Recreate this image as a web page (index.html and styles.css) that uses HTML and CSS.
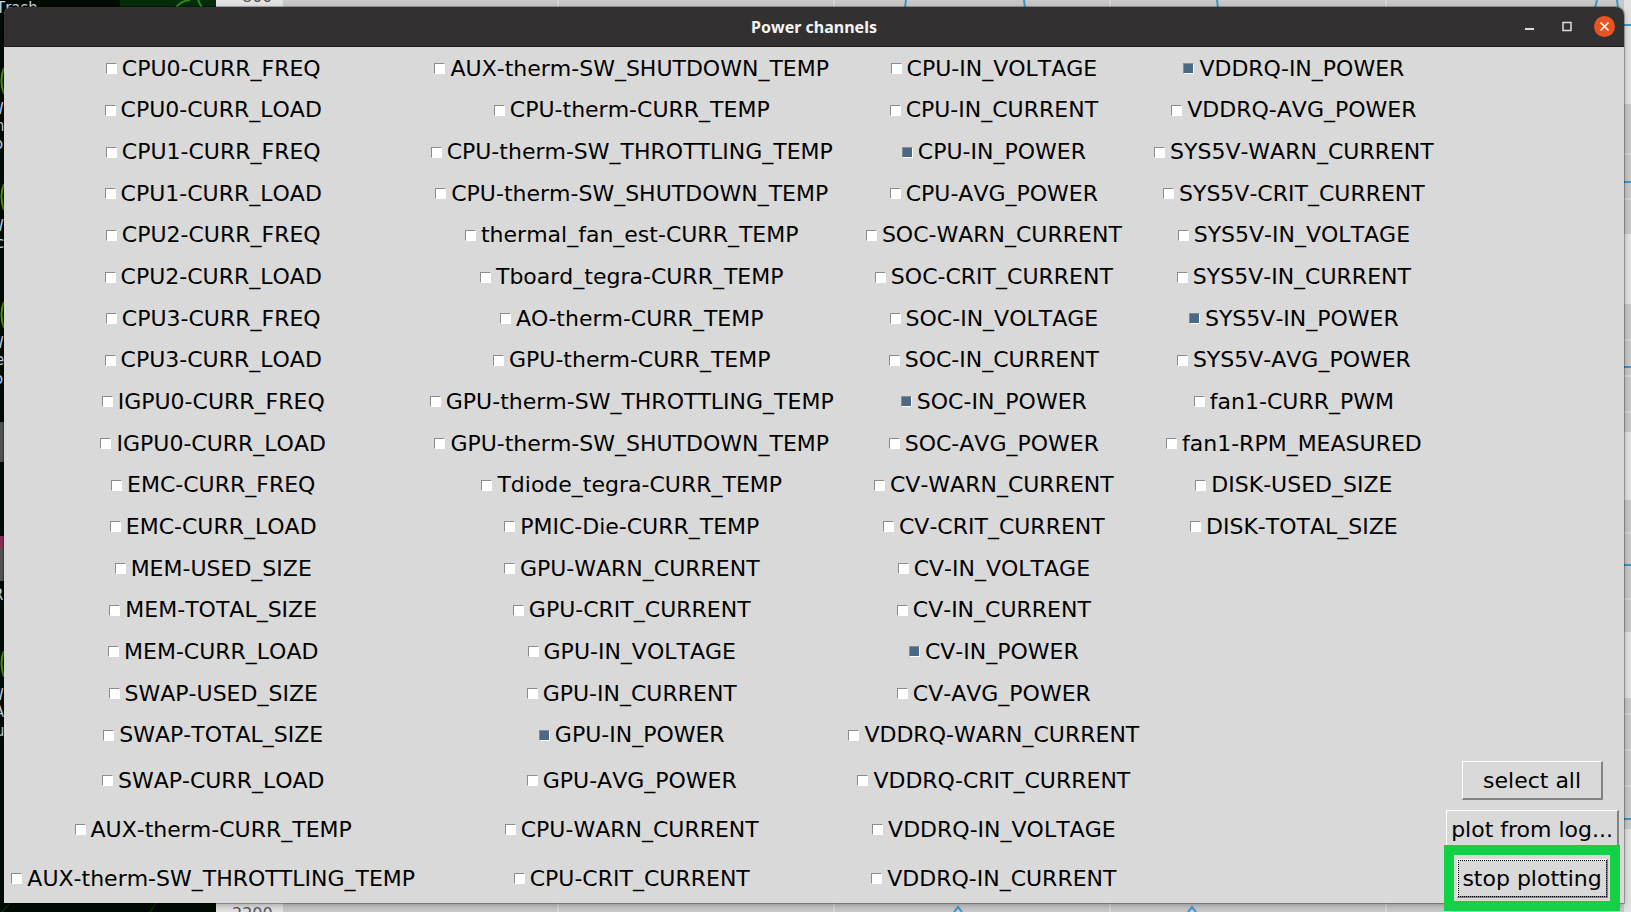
FILE: index.html
```
<!DOCTYPE html>
<html lang="en">
<head>
    <meta charset="UTF-8">
    <meta name="viewport" content="width=device-width, initial-scale=1.0">
    <title>Power channels</title>
    <link rel="stylesheet" href="styles.css">
</head>
<body>
    <!-- desktop and plot behind the window -->
    <svg class="backdrop" viewBox="0 0 1631 912" preserveAspectRatio="none" aria-hidden="true">
        <rect width="216" height="912" fill="#020a04"/>
        <path d="M120 0h96v8h-96z" fill="#062c0a"/>
        <path d="M176 8q4-7 14-8M198 0l4 8" stroke="#2f8a1c" stroke-width="2" fill="none"/>
        <path d="M4 68q-5 12 0 26M4 184q-5 12 0 26M4 302q-5 12 0 26M4 651q-5 12 0 26" stroke="#4f9a12" stroke-width="2" fill="none"/>
        <path d="M0 422h4v40H0zM0 548h4v33H0z" fill="#555"/>
        <path d="M0 536h4v12H0z" fill="#8a3358"/>
        <path d="M2 912l8-9M150 912l6-9" stroke="#0c4a0c" fill="none"/>
        <g class="icon-name">
            <text x="-4" y="13">Trash</text>
            <text x="-11" y="114">W</text>
            <text x="-5" y="131">n</text>
            <text x="-6" y="149">o</text>
            <text x="-11" y="231">W</text>
            <text x="-4" y="248">c</text>
            <text x="-11" y="348">W</text>
            <text x="-5" y="365">e</text>
            <text x="-6" y="384">o</text>
            <text x="-7" y="600">R</text>
            <text x="-11" y="700">W</text>
            <text x="-6" y="717">A</text>
            <text x="-5" y="736">u</text>
        </g>
        <rect x="216" width="1415" height="912" fill="#c8c8c8"/>
        <path d="M216 0h67v912h-67zM1624 0h7v104h-7zM1624 234h7v70h-7zM1624 432h7v68h-7zM1624 632h7v66h-7zM1624 829h7v83h-7z" fill="#e2e2e2"/>
        <path d="M558 0v8M834 0v8M1110 0v8M1386 0v8M558 903v9M834 903v9M1110 903v9M1386 903v9M1624 154h7M1624 199h7M1624 340h7M1624 376h7M1624 412h7M1624 533h7M1624 599h7M1624 714h7M1624 750h7M1624 786h7" stroke="#e6e6e6" fill="none"/>
        <path d="M906 0l-1 8M1024 0l1 8M1217 0l1 8M1597 0l-2 8M1617 0l1 8M1624 25h7M1624 182h7M1624 367h7M1624 565h7M1624 819h7M954 912l4-5 4 5M1188 912l4-5 4 5" stroke="#3a96cc" stroke-width="2" fill="none"/>
        <g class="tick">
            <text x="242" y="2">800</text>
            <text x="232" y="919">2200</text>
        </g>
    </svg>

    <main class="window">
        <header class="titlebar">
            <h1>Power channels</h1>
            <div class="controls">
                <button type="button" aria-label="Minimize">
                    <svg width="21" height="21" viewBox="0 0 21 21"><path d="M5 13h9" stroke="#ddd" stroke-width="2"/></svg>
                </button>
                <button type="button" aria-label="Maximize">
                    <svg width="21" height="21" viewBox="0 0 21 21"><path d="M6 6.500h8v8H6z" stroke="#ddd" stroke-width="1.500" fill="none"/></svg>
                </button>
                <button type="button" aria-label="Close">
                    <svg width="21" height="21" viewBox="0 0 21 21"><circle cx="10.500" cy="10.500" r="10.500" fill="#e95420"/><path d="M6.500 6.500l8 8M14.500 6.500l-8 8" stroke="#fff" stroke-width="1.600"/></svg>
                </button>
            </div>
        </header>

        <form class="channels">
            <label><input type="checkbox">CPU0-CURR_FREQ</label>
            <label><input type="checkbox">CPU0-CURR_LOAD</label>
            <label><input type="checkbox">CPU1-CURR_FREQ</label>
            <label><input type="checkbox">CPU1-CURR_LOAD</label>
            <label><input type="checkbox">CPU2-CURR_FREQ</label>
            <label><input type="checkbox">CPU2-CURR_LOAD</label>
            <label><input type="checkbox">CPU3-CURR_FREQ</label>
            <label><input type="checkbox">CPU3-CURR_LOAD</label>
            <label><input type="checkbox">IGPU0-CURR_FREQ</label>
            <label><input type="checkbox">IGPU0-CURR_LOAD</label>
            <label><input type="checkbox">EMC-CURR_FREQ</label>
            <label><input type="checkbox">EMC-CURR_LOAD</label>
            <label><input type="checkbox">MEM-USED_SIZE</label>
            <label><input type="checkbox">MEM-TOTAL_SIZE</label>
            <label><input type="checkbox">MEM-CURR_LOAD</label>
            <label><input type="checkbox">SWAP-USED_SIZE</label>
            <label><input type="checkbox">SWAP-TOTAL_SIZE</label>
            <label><input type="checkbox">SWAP-CURR_LOAD</label>
            <label><input type="checkbox">AUX-therm-CURR_TEMP</label>
            <label><input type="checkbox">AUX-therm-SW_THROTTLING_TEMP</label>

            <label><input type="checkbox">AUX-therm-SW_SHUTDOWN_TEMP</label>
            <label><input type="checkbox">CPU-therm-CURR_TEMP</label>
            <label><input type="checkbox">CPU-therm-SW_THROTTLING_TEMP</label>
            <label><input type="checkbox">CPU-therm-SW_SHUTDOWN_TEMP</label>
            <label><input type="checkbox">thermal_fan_est-CURR_TEMP</label>
            <label><input type="checkbox">Tboard_tegra-CURR_TEMP</label>
            <label><input type="checkbox">AO-therm-CURR_TEMP</label>
            <label><input type="checkbox">GPU-therm-CURR_TEMP</label>
            <label><input type="checkbox">GPU-therm-SW_THROTTLING_TEMP</label>
            <label><input type="checkbox">GPU-therm-SW_SHUTDOWN_TEMP</label>
            <label><input type="checkbox">Tdiode_tegra-CURR_TEMP</label>
            <label><input type="checkbox">PMIC-Die-CURR_TEMP</label>
            <label><input type="checkbox">GPU-WARN_CURRENT</label>
            <label><input type="checkbox">GPU-CRIT_CURRENT</label>
            <label><input type="checkbox">GPU-IN_VOLTAGE</label>
            <label><input type="checkbox">GPU-IN_CURRENT</label>
            <label><input type="checkbox" checked>GPU-IN_POWER</label>
            <label><input type="checkbox">GPU-AVG_POWER</label>
            <label><input type="checkbox">CPU-WARN_CURRENT</label>
            <label><input type="checkbox">CPU-CRIT_CURRENT</label>

            <label><input type="checkbox">CPU-IN_VOLTAGE</label>
            <label><input type="checkbox">CPU-IN_CURRENT</label>
            <label><input type="checkbox" checked>CPU-IN_POWER</label>
            <label><input type="checkbox">CPU-AVG_POWER</label>
            <label><input type="checkbox">SOC-WARN_CURRENT</label>
            <label><input type="checkbox">SOC-CRIT_CURRENT</label>
            <label><input type="checkbox">SOC-IN_VOLTAGE</label>
            <label><input type="checkbox">SOC-IN_CURRENT</label>
            <label><input type="checkbox" checked>SOC-IN_POWER</label>
            <label><input type="checkbox">SOC-AVG_POWER</label>
            <label><input type="checkbox">CV-WARN_CURRENT</label>
            <label><input type="checkbox">CV-CRIT_CURRENT</label>
            <label><input type="checkbox">CV-IN_VOLTAGE</label>
            <label><input type="checkbox">CV-IN_CURRENT</label>
            <label><input type="checkbox" checked>CV-IN_POWER</label>
            <label><input type="checkbox">CV-AVG_POWER</label>
            <label><input type="checkbox">VDDRQ-WARN_CURRENT</label>
            <label><input type="checkbox">VDDRQ-CRIT_CURRENT</label>
            <label><input type="checkbox">VDDRQ-IN_VOLTAGE</label>
            <label><input type="checkbox">VDDRQ-IN_CURRENT</label>

            <label><input type="checkbox" checked>VDDRQ-IN_POWER</label>
            <label><input type="checkbox">VDDRQ-AVG_POWER</label>
            <label><input type="checkbox">SYS5V-WARN_CURRENT</label>
            <label><input type="checkbox">SYS5V-CRIT_CURRENT</label>
            <label><input type="checkbox">SYS5V-IN_VOLTAGE</label>
            <label><input type="checkbox">SYS5V-IN_CURRENT</label>
            <label><input type="checkbox" checked>SYS5V-IN_POWER</label>
            <label><input type="checkbox">SYS5V-AVG_POWER</label>
            <label><input type="checkbox">fan1-CURR_PWM</label>
            <label><input type="checkbox">fan1-RPM_MEASURED</label>
            <label><input type="checkbox">DISK-USED_SIZE</label>
            <label><input type="checkbox">DISK-TOTAL_SIZE</label>

            <div class="actions">
                <button type="button" class="btn btn-wide">select all</button>
                <button type="button" class="btn">plot from log...</button>
                <button type="button" class="btn btn-active">stop plotting</button>
            </div>
        </form>
    </main>
</body>
</html>
```
FILE: styles.css
```
* { margin: 0; padding: 0; box-sizing: border-box; }

body {
    display: flex;
    min-height: 100vh;
    padding: 7px 7px 9px 4px;
    background: #c8c8c8;
    font-family: "DejaVu Sans", sans-serif;
    font-kerning: none;
    overflow: hidden;
}

.backdrop {
    position: absolute;
    top: 0;
    left: 0;
    width: 100%;
    height: 100%;
    z-index: -1;
}

.icon-name { fill: #c9d6e6; font-size: 15px; }
.tick { fill: #555; font-size: 16px; }

.window {
    flex: 1;
    display: flex;
    flex-direction: column;
    background: #d9d9d9;
    border-radius: 8px 8px 0 0;
    box-shadow: 0 0 0 1px rgba(0, 0, 0, 0.25), 0 2px 6px rgba(0, 0, 0, 0.3);
}

/* title bar */
.titlebar {
    display: grid;
    grid-template-columns: 1fr auto 1fr;
    align-items: center;
    height: 40px;
    padding: 0 9px;
    background: #333031;
    border-bottom: 1px solid #1c1a1b;
    border-radius: 8px 8px 0 0;
}

.titlebar h1 {
    grid-column: 2;
    color: #f4f4f4;
    font-family: "Noto Sans", sans-serif;
    font-size: 16px;
    font-weight: bold;
}

.controls {
    display: flex;
    justify-content: flex-end;
    gap: 16px;
}

.controls button {
    width: 21px;
    height: 21px;
    border: none;
    background: none;
}

.controls svg { display: block; }

/* channel list, filled column by column */
.channels {
    flex: 1;
    display: grid;
    grid-auto-flow: column;
    grid-template-columns: repeat(4, auto) max-content;
    grid-template-rows: repeat(17, minmax(0, 1fr)) repeat(3, 49px);
    padding-top: 1px;
    font-size: 22px;
    line-height: 26px;
}

.channels label {
    display: flex;
    align-items: center;
    justify-content: center;
    gap: 5px;
    padding: 0 6px;
    white-space: nowrap;
}

.channels input {
    appearance: none;
    width: 11px;
    height: 11px;
    background: #fff;
    border: 1px solid;
    border-color: #8c8c8c #fff #fff #8c8c8c;
}

.channels input:checked { background: #4a6984; }

/* buttons */
.actions {
    grid-column: 5;
    grid-row: 18 / 21;
    display: grid;
    grid-template-rows: repeat(3, 49px);
    place-items: center;
    padding: 0 5px;
}

.btn {
    height: 39px;
    padding: 0 4px;
    background: #d9d9d9;
    border: 2px solid;
    border-width: 1px 2px 2px 1px;
    border-color: #fff #828282 #828282 #fff;
    color: #000;
    font-family: inherit;
    font-size: 22px;
    white-space: nowrap;
}

.btn-wide { padding: 0 20px; }

.btn-active {
    position: relative;
    outline: 1px dotted #000;
    outline-offset: -2px;
}

/* highlight frame round the active button */
.btn-active::after {
    content: "";
    position: absolute;
    inset: -15px -14px;
    border: 10px solid #11d144;
}
```
